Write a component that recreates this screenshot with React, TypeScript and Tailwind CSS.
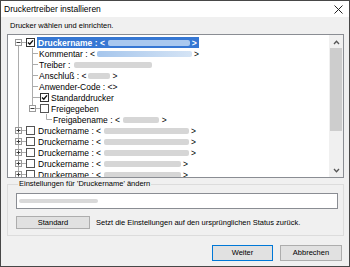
import React from "react";

const Bar = ({ w, ml = 2, blue = false, sel = false }: { w: number; ml?: number; blue?: boolean; sel?: boolean }) => (
  <span
    className={
      "inline-block h-[6px] rounded-[2px] blur-[0.7px] " +
      (sel ? "bg-[#a9c8ef]" : blue ? "bg-linear-to-r from-[#a6c6ec] to-[#d5e4f5]" : "bg-[#d6d6d6]")
    }
    style={{ width: w, marginLeft: ml }}
  />
);

const Expander = ({ minus }: { minus: boolean }) => (
  <svg width="7" height="7" viewBox="0 0 7 7" className="shrink-0">
    <rect x="0.5" y="0.5" width="6" height="6" fill="#fff" stroke="#9a9a9a" />
    <line x1="1.5" y1="3.5" x2="5.5" y2="3.5" stroke="#3d3d3d" />
    {!minus && <line x1="3.5" y1="1.5" x2="3.5" y2="5.5" stroke="#3d3d3d" />}
  </svg>
);

const Check = ({ checked }: { checked: boolean }) => (
  <svg width="9" height="9" viewBox="0 0 9 9" className="shrink-0">
    <rect x="0.5" y="0.5" width="8" height="8" fill="#fff" stroke={checked ? "#333" : "#555"} />
    {checked && <path d="M2 4.5 L3.8 6.3 L7 2.4" fill="none" stroke="#111" strokeWidth="1.4" />}
  </svg>
);

const Gt = ({ white = false, ml = 2 }: { white?: boolean; ml?: number }) => (
  <span className={white ? "text-white" : "text-black"} style={{ marginLeft: ml }}>
    &gt;
  </span>
);

function TreeLines() {
  const c = (i: number) => 7.5 + 11 * i;
  const stroke = "#acacac";
  return (
    <svg className="absolute left-0 top-0" width="330" height="142">
      <line x1="10.5" y1={c(0)} x2="10.5" y2="142" stroke={stroke} />
      {[0, 8, 9, 10, 11, 12].map((i) => (
        <line key={i} x1="10.5" y1={c(i)} x2="18" y2={c(i)} stroke={stroke} />
      ))}
      <line x1="24.5" y1="13" x2="24.5" y2={c(6)} stroke={stroke} />
      {[1, 2, 3, 4].map((i) => (
        <line key={i} x1="24.5" y1={c(i)} x2="30" y2={c(i)} stroke={stroke} />
      ))}
      <line x1="24.5" y1={c(5)} x2="32" y2={c(5)} stroke={stroke} />
      <line x1="24.5" y1={c(6)} x2="32" y2={c(6)} stroke={stroke} />
      <line x1="38.5" y1="79" x2="38.5" y2={c(7)} stroke={stroke} />
      <line x1="38.5" y1={c(7)} x2="44" y2={c(7)} stroke={stroke} />
    </svg>
  );
}

const Row = ({ children }: { children: React.ReactNode }) => (
  <div className="relative h-[11px] flex items-center whitespace-nowrap">{children}</div>
);

const RootRow = ({ bar, minus = false }: { bar: number; minus?: boolean }) => (
  <Row>
    <span className="w-[7px]" />
    <Expander minus={minus} />
    <span className="w-[4px]" />
    <Check checked={false} />
    <span className="ml-[2px] pl-[1px] flex items-center">
      Druckername : &lt;
      <Bar w={bar} ml={3} />
      <Gt />
    </span>
  </Row>
);

function Chevron({ up }: { up: boolean }) {
  return (
    <svg width="7" height="5" viewBox="0 0 7 5">
      <path d={up ? "M1 4 L3.5 1.3 L6 4" : "M1 1 L3.5 3.7 L6 1"} fill="none" stroke="#555" strokeWidth="1.3" />
    </svg>
  );
}

export default function App() {
  return (
    <div className="w-[350px] h-[267px] border border-[#474747] bg-[#f0f0f0] flex flex-col overflow-hidden text-black font-['Liberation_Sans',Arial,sans-serif] text-[7.5px] leading-[10px]">
      {/* title bar */}
      <div className="h-[16px] shrink-0 bg-white flex items-center justify-between pl-[3px] pr-[6px]">
        <span className="text-[8.5px]">Druckertreiber installieren</span>
        <svg width="9" height="9" viewBox="0 0 9 9">
          <path d="M0.5 0.5 L8.5 8.5 M8.5 0.5 L0.5 8.5" stroke="#222" strokeWidth="1" />
        </svg>
      </div>

      <div className="flex-1 flex flex-col pl-[6px] pr-[5px]">
        <div className="h-[17px] flex items-center pl-[3px]">Drucker wählen und einrichten.</div>

        {/* tree box */}
        <div className="h-[144px] border border-[#8a8d93] bg-white flex">
          <div className="relative flex-1 overflow-hidden pt-[2px] text-[8.5px]">
            <TreeLines />
            <Row>
              <span className="w-[7px]" />
              <Expander minus />
              <span className="w-[4px]" />
              <Check checked />
              <span className="ml-[2px] h-[11px] pl-[1px] pr-[2px] flex items-center bg-[#3677d3] text-white font-bold">
                Druckername : &lt;
                <Bar w={82} ml={3} sel />
                <Gt white />
              </span>
            </Row>
            <Row>
              <span className="pl-[31px] flex items-center">
                Kommentar : &lt;
                <Bar w={95} blue />
                <Gt />
              </span>
            </Row>
            <Row>
              <span className="pl-[31px] flex items-center">
                Treiber :
                <Bar w={78} ml={4} />
              </span>
            </Row>
            <Row>
              <span className="pl-[31px] flex items-center">
                Anschluß : &lt;
                <Bar w={22} />
                <Gt />
              </span>
            </Row>
            <Row>
              <span className="pl-[31px]">Anwender-Code : &lt;&gt;</span>
            </Row>
            <Row>
              <span className="w-[32px]" />
              <Check checked />
              <span className="ml-[2px]">Standarddrucker</span>
            </Row>
            <Row>
              <span className="w-[21px]" />
              <Expander minus />
              <span className="w-[4px]" />
              <Check checked={false} />
              <span className="ml-[2px]">Freigegeben</span>
            </Row>
            <Row>
              <span className="pl-[45px] flex items-center">
                Freigabename : &lt;
                <Bar w={36} ml={3} />
                <Gt ml={3} />
              </span>
            </Row>
            <RootRow bar={85} />
            <RootRow bar={85} />
            <RootRow bar={85} />
            <RootRow bar={77} />
            <RootRow bar={77} />
          </div>
          {/* scrollbar */}
          <div className="w-[14px] bg-[#f0f0f0] flex flex-col">
            <div className="h-[13px] flex items-center justify-center pt-[2px]">
              <Chevron up />
            </div>
            <div className="h-[83px] mx-[1px] bg-[#cdcdcd]" />
            <div className="flex-1" />
            <div className="h-[13px] flex items-center justify-center">
              <Chevron up={false} />
            </div>
          </div>
        </div>

        {/* group box */}
        <fieldset className="mt-[1px] border border-[#dcdcdc] pl-[8px] pr-[5px] pb-[6px]">
          <legend className="ml-[2px] px-[1px] leading-[10px]">Einstellungen für 'Druckername' ändern</legend>
          <div className="mt-[4px] h-[16px] border border-[#8a8d93] bg-white flex items-center pl-[2px]">
            <span className="inline-block h-[4px] w-[79px] rounded-[2px] bg-[#d9d9d9] blur-[0.7px]" />
          </div>
          <div className="mt-[7px] flex items-center">
            <div className="w-[74px] h-[13px] border border-[#adadad] bg-[#e1e1e1] flex items-center justify-center">
              Standard
            </div>
            <span className="ml-[6px]">Setzt die Einstellungen auf den ursprünglichen Status zurück.</span>
          </div>
        </fieldset>

        <div className="mt-[9px] flex justify-end gap-[7px] pr-[2px]">
          <div className="w-[61px] h-[16px] border border-[#0078d7] bg-[#e1e1e1] flex items-center justify-center">Weiter</div>
          <div className="w-[62px] h-[16px] border border-[#adadad] bg-[#e1e1e1] flex items-center justify-center">Abbrechen</div>
        </div>
      </div>
    </div>
  );
}
